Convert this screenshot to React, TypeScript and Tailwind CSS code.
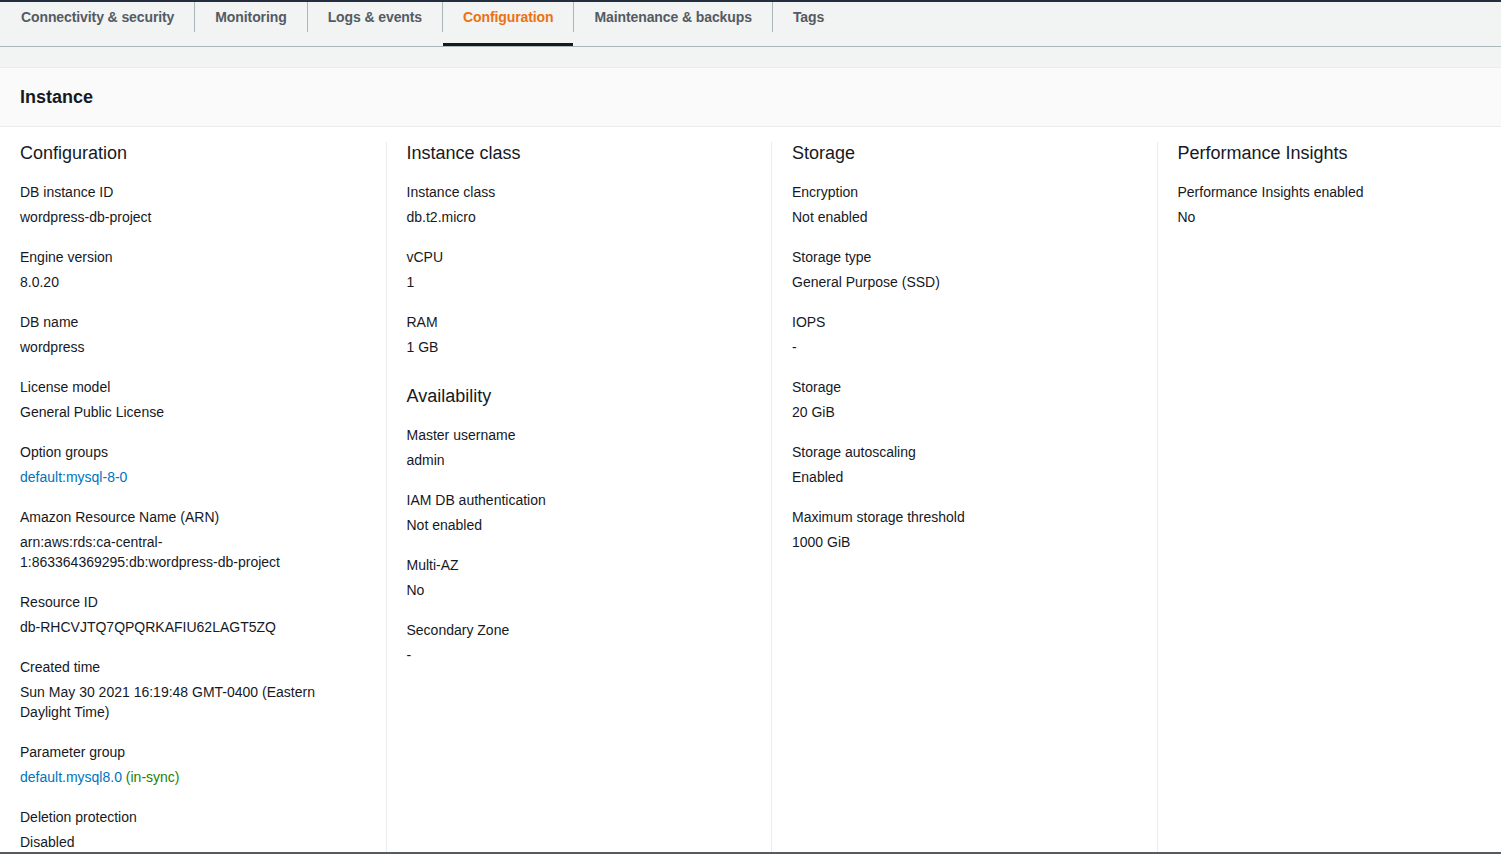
import React from 'react';

type Item = {
    label: string;
    value: React.ReactNode;
};

type Section = {
    title: string;
    items: Item[];
};

const tabs = [
    'Connectivity & security',
    'Monitoring',
    'Logs & events',
    'Configuration',
    'Maintenance & backups',
    'Tags',
];

const Link = ({ children }: { children: React.ReactNode }) => (
    <a href="#" className="text-[#0073bb] hover:underline">{children}</a>
);

const columns: Section[][] = [
    [
        {
            title: 'Configuration',
            items: [
                { label: 'DB instance ID', value: 'wordpress-db-project' },
                { label: 'Engine version', value: '8.0.20' },
                { label: 'DB name', value: 'wordpress' },
                { label: 'License model', value: 'General Public License' },
                { label: 'Option groups', value: <Link>default:mysql-8-0</Link> },
                {
                    label: 'Amazon Resource Name (ARN)',
                    value: (
                        <>
                            arn:aws:rds:ca-central-
                            <br />
                            1:863364369295:db:wordpress-db-project
                        </>
                    ),
                },
                { label: 'Resource ID', value: 'db-RHCVJTQ7QPQRKAFIU62LAGT5ZQ' },
                { label: 'Created time', value: 'Sun May 30 2021 16:19:48 GMT-0400 (Eastern Daylight Time)' },
                {
                    label: 'Parameter group',
                    value: (
                        <>
                            <Link>default.mysql8.0</Link> <span className="text-[#1d8102]">(in-sync)</span>
                        </>
                    ),
                },
                { label: 'Deletion protection', value: 'Disabled' },
            ],
        },
    ],
    [
        {
            title: 'Instance class',
            items: [
                { label: 'Instance class', value: 'db.t2.micro' },
                { label: 'vCPU', value: '1' },
                { label: 'RAM', value: '1 GB' },
            ],
        },
        {
            title: 'Availability',
            items: [
                { label: 'Master username', value: 'admin' },
                { label: 'IAM DB authentication', value: 'Not enabled' },
                { label: 'Multi-AZ', value: 'No' },
                { label: 'Secondary Zone', value: '-' },
            ],
        },
    ],
    [
        {
            title: 'Storage',
            items: [
                { label: 'Encryption', value: 'Not enabled' },
                { label: 'Storage type', value: 'General Purpose (SSD)' },
                { label: 'IOPS', value: '-' },
                { label: 'Storage', value: '20 GiB' },
                { label: 'Storage autoscaling', value: 'Enabled' },
                { label: 'Maximum storage threshold', value: '1000 GiB' },
            ],
        },
    ],
    [
        {
            title: 'Performance Insights',
            items: [{ label: 'Performance Insights enabled', value: 'No' }],
        },
    ],
];

const App: React.FC = () => {
    const active = 'Configuration';

    return (
        <div
            className="h-screen overflow-hidden flex flex-col bg-[#f2f3f3] border-t-2 border-t-[#232f3e] border-b-2 border-b-[#545b64] text-[#16191f] text-[14px]"
            style={{ fontFamily: '"Liberation Sans", Arial, sans-serif' }}
        >
            {/* tabs */}
            <div className="flex h-[45px] border-b border-[#aab7b8] shrink-0">
                {tabs.map((tab, i) => (
                    <React.Fragment key={tab}>
                        {i > 0 && <span className="w-px h-[30px] bg-[#aab7b8] shrink-0" />}
                        <button
                            className={`relative px-5 ${i === 0 ? 'pl-[21px]' : ''} pt-[5px] h-full flex items-start font-bold leading-5 tracking-[-0.1px] whitespace-nowrap ${tab === active ? 'text-[#ec7211]' : 'text-[#545b64] hover:text-[#16191f]'}`}
                        >
                            {tab}
                            {tab === active && <span className="absolute left-0 right-0 bottom-0 h-[3px] bg-[#16191f]" />}
                        </button>
                    </React.Fragment>
                ))}
            </div>

            <div className="h-[20px] shrink-0" />

            {/* panel */}
            <div className="flex-1 min-h-0 bg-white border-t border-[#eaeded] overflow-hidden">
                <div className="h-[59px] bg-[#fafafa] border-b border-[#eaeded] px-5 flex items-center">
                    <h2 className="text-[18px] font-bold leading-6">Instance</h2>
                </div>
                <div className="grid grid-cols-[repeat(4,385.5px)] pt-[15px]">
                    {columns.map((sections, ci) => (
                        <div key={ci} className={`px-5 min-h-[720px] ${ci > 0 ? 'border-l border-[#eaeded]' : ''}`}>
                            {sections.map((section, si) => (
                                <div key={section.title} className={si > 0 ? 'mt-[28px]' : ''}>
                                    <h3 className="text-[18px] leading-[22px] mb-[18px]">{section.title}</h3>
                                    {section.items.map(item => (
                                        <div key={item.label} className="mb-5">
                                            <div className="leading-5">{item.label}</div>
                                            <div className="leading-5 mt-[5px] break-words">{item.value}</div>
                                        </div>
                                    ))}
                                </div>
                            ))}
                        </div>
                    ))}
                </div>
            </div>
        </div>
    );
};

export default App;
